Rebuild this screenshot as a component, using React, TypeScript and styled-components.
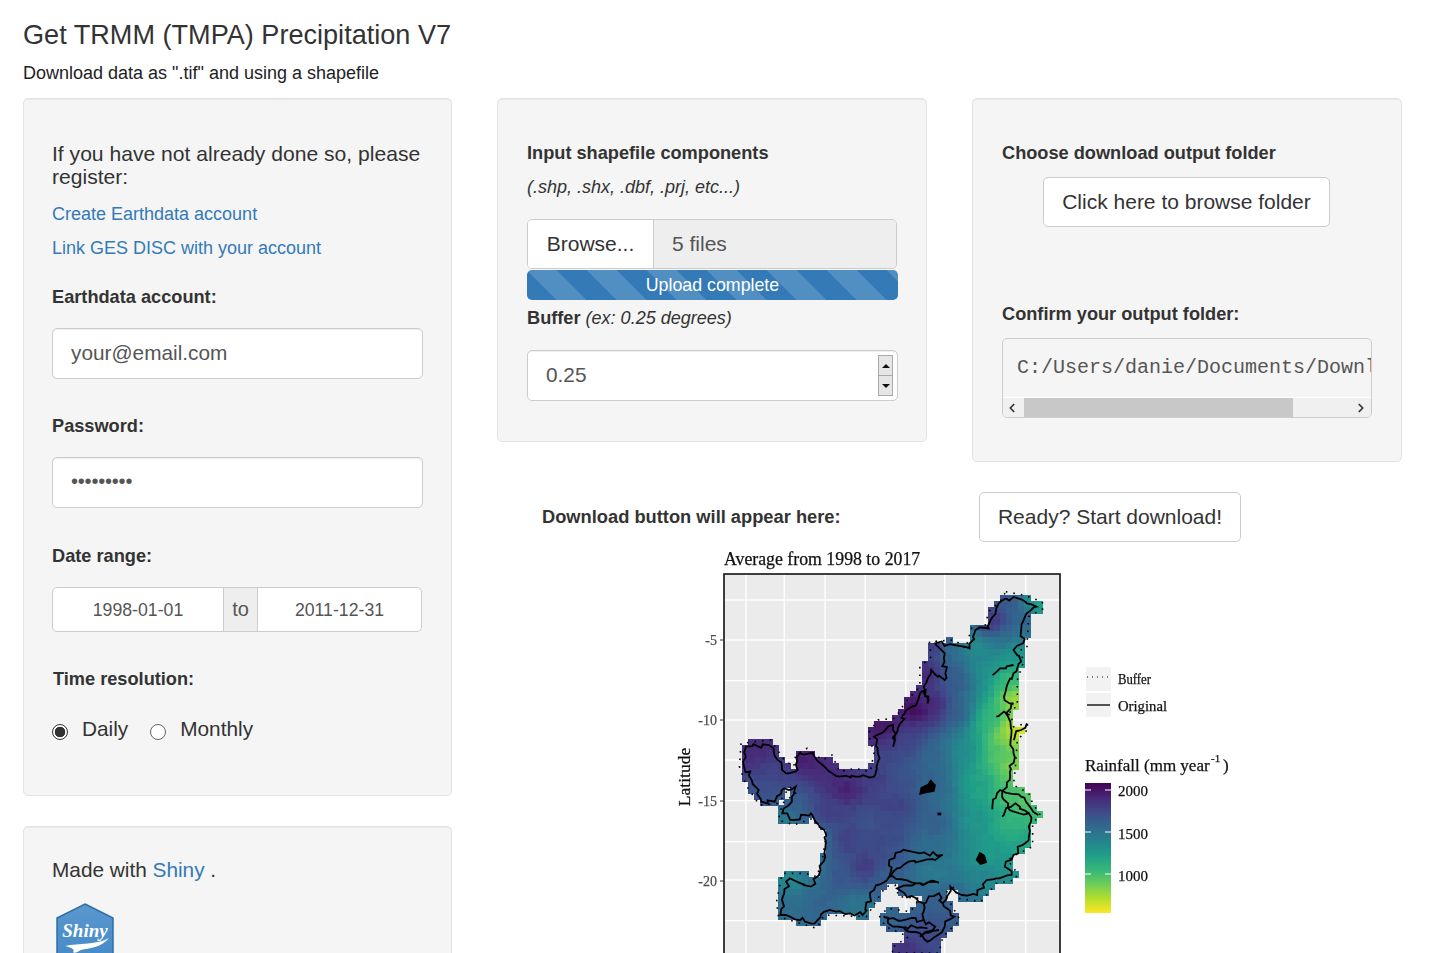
import React from "react";
import styled, {createGlobalStyle} from "styled-components";
import {ChevronLeft, ChevronRight} from "lucide-react";

const GlobalStyle = createGlobalStyle`
  html, body {
    margin: 0;
    height: 953px;
    overflow: hidden;
    background: #fff;
  }
  body {
    font-family: "Liberation Sans", Arial, sans-serif;
    color: #333;
  }
  * {
    box-sizing: border-box;
  }
`;

const Page = styled.div`
  height: 953px;
  overflow: hidden;
  padding: 0 0 0 23px;
`;

const Title = styled.h2`
  margin: 0;
  padding-top: 18px;
  height: 55px;
  font-size: 27.1px;
  line-height: 33px;
  font-weight: 400;
`;

const Subtitle = styled.div`
  height: 43px;
  font-size: 18px;
  line-height: 37px;
  color: #222;
`;

const Columns = styled.div`
  display: flex;
  gap: 45px;
  align-items: flex-start;
`;

const LeftColumn = styled.div`
  width: 429px;
  display: flex;
  flex-direction: column;
  gap: 30px;
`;

const RightArea = styled.div`
  width: 905px;
`;

const TopRow = styled.div`
  display: flex;
  gap: 45px;
  align-items: flex-start;
`;

const Well = styled.div<{$pad: number; $top: number; $bottom: number; $width: number}>`
  width: ${(p) => p.$width}px;
  padding: ${(p) => p.$top}px ${(p) => p.$pad}px ${(p) => p.$bottom}px;
  background: #f5f5f5;
  border: 1px solid #e3e3e3;
  border-radius: 5px;
  box-shadow: inset 0 1px 1px rgba(0, 0, 0, 0.05);
`;

const Lead = styled.div`
  font-size: 21.1px;
  line-height: 23px;
`;

const TextLink = styled.a<{$mt: number}>`
  display: block;
  margin-top: ${(p) => p.$mt}px;
  font-size: 18px;
  line-height: 24px;
  color: #337ab7;
`;

const Label = styled.div<{$mt?: number; $indent?: number}>`
  margin-top: ${(p) => p.$mt ?? 0}px;
  margin-left: ${(p) => p.$indent ?? 0}px;
  font-size: 18.2px;
  line-height: 24px;
  font-weight: 700;
  white-space: nowrap;
`;

const Hint = styled.div<{$mt: number}>`
  margin-top: ${(p) => p.$mt}px;
  font-size: 18px;
  line-height: 24px;
  font-style: italic;
`;

const Normal = styled.span`
  font-size: 18px;
  font-weight: 400;
  font-style: italic;
`;

const TextInput = styled.div<{$mt: number; $width?: number}>`
  display: flex;
  align-items: center;
  justify-content: space-between;
  margin-top: ${(p) => p.$mt}px;
  width: ${(p) => (p.$width ? `${p.$width}px` : "auto")};
  height: 51px;
  padding: 0 4px 2px 18px;
  background: #fff;
  border: 1px solid #ccc;
  border-radius: 5px;
  box-shadow: inset 0 1px 1px rgba(0, 0, 0, 0.075);
  font-size: 20.8px;
  color: #555;
`;

const Dots = styled.span`
  font-size: 20px;
  letter-spacing: -0.2px;
  color: #555;
`;

const Spinner = styled.div`
  display: flex;
  flex-direction: column;
  width: 15px;
  height: 41px;
  margin-top: 2px;
  border: 1px solid #a9a9a9;
`;

const SpinButton = styled.div`
  flex: 1;
  display: flex;
  align-items: center;
  justify-content: center;
  background: #e6e6e6;
  & + & {
    border-top: 1px solid #a9a9a9;
  }
`;

const Arrow = styled.span<{$down?: boolean}>`
  width: 0;
  height: 0;
  border-left: 4px solid transparent;
  border-right: 4px solid transparent;
  ${(p) => (p.$down ? "border-top: 4px solid #111;" : "border-bottom: 4px solid #111;")}
`;

const DateGroup = styled.div`
  display: flex;
  margin-top: 19px;
  height: 45px;
  width: 370px;
  background: #fff;
  border: 1px solid #ccc;
  border-radius: 5px;
  font-size: 17.7px;
  color: #555;
`;

const DateField = styled.div<{$width: number}>`
  width: ${(p) => p.$width}px;
  display: flex;
  align-items: center;
  justify-content: center;
  padding-top: 2px;
`;

const DateJoin = styled.div`
  width: 35px;
  display: flex;
  align-items: center;
  justify-content: center;
  background: #eee;
  border-left: 1px solid #ccc;
  border-right: 1px solid #ccc;
  font-size: 20px;
`;

const RadioRow = styled.div`
  display: flex;
  align-items: center;
  margin-top: 26px;
  height: 24px;
  font-size: 20.8px;
`;

const RadioItem = styled.div`
  display: flex;
  align-items: center;
  margin-right: 22px;
`;

const RadioMark = styled.span<{$on?: boolean}>`
  width: 16px;
  height: 16px;
  margin: 5px 14px 0 0;
  border-radius: 50%;
  border: 1px solid ${(p) => (p.$on ? "#333" : "#666")};
  background: ${(p) => (p.$on ? "radial-gradient(circle, #333 0, #333 5px, #fff 5.6px)" : "#fff")};
`;

const MadeWith = styled.div`
  font-size: 20.8px;
  line-height: 24px;
`;

const InlineLink = styled.a`
  color: #337ab7;
`;

const Logo = styled.svg`
  display: block;
  margin: 21px 0 0 3px;
`;

const FileRow = styled.div`
  display: flex;
  margin-top: 20px;
  height: 50px;
  border: 1px solid #ccc;
  border-radius: 5px;
  overflow: hidden;
  font-size: 21px;
`;

const BrowseButton = styled.div`
  width: 126px;
  display: flex;
  align-items: center;
  justify-content: center;
  background: #fff;
  border-right: 1px solid #ccc;
`;

const FileName = styled.div`
  flex: 1;
  display: flex;
  align-items: center;
  padding-left: 18px;
  background: #eee;
  color: #555;
`;

const Progress = styled.div`
  display: flex;
  align-items: center;
  justify-content: center;
  width: 371px;
  margin-top: 1px;
  height: 30px;
  border-radius: 5px;
  color: #fff;
  font-size: 17.8px;
  background-color: #337ab7;
  background-image: linear-gradient(
    45deg,
    rgba(255, 255, 255, 0.15) 25%,
    transparent 25%,
    transparent 50%,
    rgba(255, 255, 255, 0.15) 50%,
    rgba(255, 255, 255, 0.15) 75%,
    transparent 75%,
    transparent
  );
  background-size: 60px 60px;
`;

const Button = styled.div<{$width: number; $ml?: number; $mt?: number}>`
  display: flex;
  align-items: center;
  justify-content: center;
  width: ${(p) => p.$width}px;
  height: 50px;
  margin-left: ${(p) => p.$ml ?? 0}px;
  margin-top: ${(p) => p.$mt ?? 0}px;
  background: #fff;
  border: 1px solid #ccc;
  border-radius: 5px;
  font-size: 21px;
  white-space: nowrap;
`;

const PathBox = styled.div`
  margin-top: 12px;
  height: 80px;
  background: #f5f5f5;
  border: 1px solid #ccc;
  border-radius: 5px;
  overflow: hidden;
`;

const PathText = styled.div`
  height: 58px;
  padding: 17px 0 0 14px;
  font-family: "Liberation Mono", "Courier New", monospace;
  font-size: 20px;
  line-height: 24px;
  white-space: nowrap;
  overflow: hidden;
  color: #555;
`;

const ScrollBar = styled.div`
  display: flex;
  align-items: center;
  height: 20px;
  background: #f0f0f0;
  border-top: 1px solid #fff;
  color: #333;
`;

const ScrollArrow = styled.div<{$shift?: number}>`
  width: 21px;
  display: flex;
  justify-content: center;
  padding-right: ${(p) => p.$shift ?? 0}px;
`;

const ScrollThumb = styled.div`
  width: 269px;
  height: 19px;
  background: #c8c8c8;
`;

const ScrollRest = styled.div`
  flex: 1;
`;

const DownloadRow = styled.div`
  display: flex;
  align-items: center;
  margin-top: 30px;
  height: 50px;
`;

const DownloadLabel = styled.div`
  width: 482px;
  padding-left: 45px;
  font-size: 18.3px;
  font-weight: 700;
`;

const PlotSvg = styled.svg`
  display: block;
  margin: 3px 0 0 163px;
  filter: blur(0.5px);
`;

const SerifText = styled.text<{$size: number; $fill?: string}>`
  font-family: "Liberation Serif", "Times New Roman", serif;
  font-size: ${(p) => p.$size}px;
  fill: ${(p) => p.$fill ?? "#111"};
  stroke: ${(p) => p.$fill ?? "#111"};
  stroke-width: 0.25px;
`;

type Pt = [number, number];

// all map coordinates are taken off the 600x413 crop of the plot
const OUTLINE: Pt[] = [
  [905, 155], [950, 165], [1000, 185], [1005, 205], [965, 230], [960, 320], [945, 325], [950, 370], [935, 420],
  [935, 500], [915, 510], [925, 560], [960, 550], [965, 565], [935, 600], [930, 680], [925, 735], [965, 760],
  [975, 790], [995, 825], [975, 850], [975, 920], [930, 945], [910, 960], [935, 1000], [930, 1020], [880, 1030],
  [840, 1085], [780, 1075], [770, 1040], [745, 1060], [770, 1110], [785, 1140], [740, 1190], [730, 1239],
  [610, 1239], [605, 1225], [650, 1190], [590, 1160], [575, 1130], [595, 1105], [655, 1115], [680, 1075],
  [625, 1070], [615, 1035], [590, 1040], [540, 1130], [430, 1125], [410, 1165], [310, 1130], [305, 1085],
  [320, 1000], [380, 1000], [410, 1010], [425, 960], [435, 880], [400, 835], [350, 855], [310, 840], [320, 790],
  [355, 760], [340, 740], [310, 790], [260, 795], [225, 735], [208, 680], [212, 610], [290, 600], [325, 660],
  [350, 680], [355, 645], [385, 625], [425, 660], [450, 645], [470, 695], [510, 685], [550, 695], [560, 640],
  [545, 580], [570, 540], [615, 535], [640, 490], [680, 440], [680, 380], [710, 350], [705, 305], [770, 300],
  [800, 325], [815, 265], [850, 260], [860, 215], [890, 185],
];

const COAST: Pt[] = [
  [905, 175], [945, 178], [985, 200], [955, 230], [945, 270], [950, 310], [925, 330], [945, 365], [925, 400],
  [910, 430], [900, 470], [925, 490], [905, 520], [920, 570], [925, 640], [915, 720], [895, 770], [915, 810],
  [965, 820], [965, 860], [965, 900], [925, 945], [905, 965], [920, 1005], [880, 1015], [855, 1020], [830, 1065],
  [790, 1065], [760, 1040], [740, 1090], [770, 1130], [745, 1160], [720, 1190], [700, 1205], [680, 1180],
  [610, 1160], [585, 1130], [640, 1140], [690, 1140], [690, 1090], [640, 1060], [620, 1045], [670, 1030],
  [730, 1028], [670, 1030], [600, 1010], [600, 960], [630, 935], [680, 940], [740, 945], [720, 960], [650, 965],
  [620, 985], [600, 1010], [560, 1050], [530, 1125], [460, 1115], [430, 1115], [405, 1150], [340, 1130],
  [315, 1125], [325, 1060], [340, 1015], [395, 1040], [420, 990], [430, 940], [430, 870], [395, 820], [350, 840],
  [320, 820], [345, 770], [355, 740], [325, 745], [300, 785], [265, 785], [240, 720], [220, 680], [225, 620],
  [285, 615], [330, 700], [360, 690], [365, 640], [400, 640], [430, 680], [470, 710], [560, 710], [570, 640],
  [560, 590], [610, 555], [610, 620], [640, 520], [695, 450], [700, 490], [690, 440], [710, 390], [745, 420],
  [745, 340], [720, 310], [770, 315], [810, 325], [825, 270], [860, 265], [880, 205], [905, 175],
];

const RIVERS: Pt[][] = [
  [[870, 405], [890, 385], [925, 375]],
  [[880, 530], [900, 515], [915, 525]],
  [[925, 600], [945, 570], [960, 550]],
  [[870, 808], [890, 750], [945, 770], [990, 825]],
  [[895, 830], [930, 790], [965, 820]],
  [[690, 1140], [720, 1160], [680, 1190], [730, 1170]],
  [[690, 1090], [730, 1060], [740, 1090]],
  [[640, 1160], [700, 1165]],
];

const BLOBS: Pt[][] = [
  [[678, 765], [682, 742], [700, 732], [708, 718], [722, 735], [718, 755], [695, 760]],
  [[826, 960], [836, 935], [850, 945], [856, 968], [838, 975]],
  [[726, 818], [736, 818], [736, 826], [726, 826]],
];

const SAMPLES: [number, number, number][] = [
  [905, 170, 0.25], [990, 195, 0.6], [960, 230, 0.3], [870, 250, 0.12], [900, 300, 0.35], [830, 320, 0.5],
  [920, 340, 0.55], [760, 330, 0.38], [720, 320, 0.15], [700, 400, 0.1], [780, 420, 0.28], [850, 400, 0.5],
  [910, 420, 0.68], [930, 480, 0.88], [670, 510, 0.02], [720, 500, 0.1], [780, 520, 0.3], [860, 540, 0.65],
  [915, 580, 0.85], [945, 570, 1], [590, 560, 0.05], [640, 600, 0.2], [720, 650, 0.32], [800, 640, 0.48],
  [880, 650, 0.72], [920, 680, 0.82], [250, 640, 0.12], [300, 700, 0.2], [260, 760, 0.25], [380, 660, 0.08],
  [440, 690, 0.12], [490, 750, 0.08], [560, 720, 0.18], [640, 720, 0.25], [720, 740, 0.32], [840, 740, 0.58],
  [910, 760, 0.72], [960, 780, 0.75], [985, 825, 0.68], [350, 790, 0.28], [330, 830, 0.42], [440, 820, 0.18],
  [550, 840, 0.25], [620, 800, 0.18], [720, 850, 0.3], [830, 840, 0.52], [920, 860, 0.65], [960, 900, 0.58],
  [420, 900, 0.38], [480, 900, 0.18], [600, 900, 0.22], [700, 920, 0.35], [860, 950, 0.55], [540, 980, 0.15],
  [480, 1000, 0.26], [400, 980, 0.38], [340, 1020, 0.48], [320, 1100, 0.35], [420, 1090, 0.32], [520, 1100, 0.4],
  [590, 1010, 0.3], [720, 1000, 0.42], [860, 1010, 0.45], [920, 990, 0.52], [740, 1080, 0.3], [620, 1130, 0.33],
  [700, 1180, 0.22], [640, 1220, 0.14], [760, 1130, 0.28],
];

const VIRIDIS: [number, number, number][] = [
  [68, 1, 84], [72, 40, 120], [62, 74, 137], [49, 104, 142], [38, 130, 142],
  [31, 158, 137], [53, 183, 121], [109, 205, 89], [180, 222, 44], [253, 231, 37],
];

const viridis = (v: number) => {
  const t = Math.max(0, Math.min(0.9999, v)) * (VIRIDIS.length - 1);
  const i = Math.floor(t);
  const f = t - i;
  const c = VIRIDIS[i].map((a, k) => Math.round(a + (VIRIDIS[i + 1][k] - a) * f));
  return `rgb(${c[0]},${c[1]},${c[2]})`;
};

const hash = (a: number, b: number) => {
  const s = Math.sin(a * 12.9898 + b * 78.233) * 43758.5453;
  return s - Math.floor(s);
};

const inside = (x: number, y: number, poly: Pt[]) => {
  let hit = false;
  for (let i = 0, j = poly.length - 1; i < poly.length; j = i++) {
    const [xi, yi] = poly[i];
    const [xj, yj] = poly[j];
    if (yi > y !== yj > y && x < ((xj - xi) * (y - yi)) / (yj - yi) + xi) hit = !hit;
  }
  return hit;
};

const rainfallAt = (x: number, y: number) => {
  let sum = 0;
  let weight = 0;
  SAMPLES.forEach(([sx, sy, v]) => {
    const d = (sx - x) ** 2 + (sy - y) ** 2 + 900;
    const w = 1 / d ** 1.6;
    sum += v * w;
    weight += w;
  });
  return sum / weight + (hash(x, y) - 0.5) * 0.025;
};

const CELL_W = 15.7;
const CELL_H = 18;

const CELLS: {x: number; y: number; fill: string}[] = [];
for (let y = 148; y < 1245; y += CELL_H) {
  for (let x = 200; x < 1010; x += CELL_W) {
    if (inside(x + CELL_W / 2, y + CELL_H / 2, OUTLINE)) {
      CELLS.push({x, y, fill: viridis(rainfallAt(x + CELL_W / 2, y + CELL_H / 2))});
    }
  }
}

const roughen = (points: Pt[]) => {
  const out: Pt[] = [];
  points.forEach((p, i) => {
    out.push(p);
    const next = points[i + 1];
    if (!next) return;
    const steps = Math.max(2, Math.round(Math.hypot(next[0] - p[0], next[1] - p[1]) / 12));
    for (let k = 1; k < steps; k++) {
      const f = k / steps;
      out.push([
        p[0] + (next[0] - p[0]) * f + (hash(i, k) - 0.5) * 14,
        p[1] + (next[1] - p[1]) * f + (hash(k, i) - 0.5) * 14,
      ]);
    }
  });
  return out;
};

const toPoints = (points: Pt[]) => points.map((p) => p.join(",")).join(" ");

const GRID_X = [225, 325, 432, 537, 643, 745, 851, 957];
const GRID_Y = [180, 300, 422, 540, 660, 782, 905, 1020, 1142];
const SX = 600 / 1570;
const SY = 1 / 3;
const px = (x: number) => x * SX;
const py = (y: number) => y * SY;

const Plot: React.FC = () => (
  <PlotSvg width={600} height={408} viewBox="0 5 600 408">
    <defs>
      <linearGradient id="rain" x1="0" y1="0" x2="0" y2="1">
        {VIRIDIS.map((_, i) => (
          <stop key={i} offset={i / 9} stopColor={viridis(i / 9)}/>
        ))}
      </linearGradient>
    </defs>
    <SerifText $size={17.8} x={64} y={25}>Average from 1998 to 2017</SerifText>
    <rect x={64} y={34} width={336} height={400} fill="#ebebeb"/>
    {GRID_X.map((x) => (
      <line key={x} x1={px(x)} x2={px(x)} y1={34} y2={413} stroke="#fff" strokeWidth={1.4}/>
    ))}
    {GRID_Y.map((y) => (
      <line key={y} x1={64} x2={400} y1={py(y)} y2={py(y)} stroke="#fff" strokeWidth={1.4}/>
    ))}
    <g transform={`scale(${SX} ${SY})`}>
      {CELLS.map((c) => (
        <rect key={`${c.x}-${c.y}`} x={c.x} y={c.y} width={CELL_W + 0.6} height={CELL_H + 0.6} fill={c.fill} shapeRendering="crispEdges"/>
      ))}
      <polygon
        points={toPoints(OUTLINE)}
        fill="none"
        stroke="#000"
        strokeWidth={1.6}
        strokeDasharray="1.6 6"
        vectorEffect="non-scaling-stroke"
      />
      <polyline
        points={toPoints(roughen(COAST))}
        fill="none"
        stroke="#000"
        strokeWidth={1.8}
        vectorEffect="non-scaling-stroke"
      />
      {RIVERS.map((r, i) => (
        <polyline
          key={i}
          points={toPoints(roughen(r))}
          fill="none"
          stroke="#000"
          strokeWidth={1.8}
          vectorEffect="non-scaling-stroke"
        />
      ))}
      {BLOBS.map((b, i) => (
        <polygon key={i} points={toPoints(b)} fill="#000"/>
      ))}
    </g>
    <rect x={64} y={34} width={336} height={400} fill="none" stroke="#111" strokeWidth={1.6}/>
    {[["-5", 100], ["-10", 180], ["-15", 261], ["-20", 341]].map(([t, y]) => (
      <g key={t}>
        <SerifText $size={14} $fill="#4d4d4d" x={57} y={Number(y) + 5} textAnchor="end">{t}</SerifText>
        <line x1={60} x2={64} y1={y} y2={y} stroke="#333"/>
      </g>
    ))}
    <SerifText $size={17.5} x={30} y={237} textAnchor="middle" transform="rotate(-90 30 237)">Latitude</SerifText>

    <rect x={426} y={127} width={25} height={24} fill="#f2f2f2"/>
    <rect x={426} y={153} width={25} height={24} fill="#f2f2f2"/>
    <line x1={427} x2={450} y1={137} y2={137} stroke="#111" strokeWidth={1.2} strokeDasharray="1 4"/>
    <line x1={427} x2={450} y1={165} y2={165} stroke="#111" strokeWidth={1.4}/>
    <SerifText $size={14.5} x={458} y={144} textLength={33} lengthAdjust="spacingAndGlyphs">Buffer</SerifText>
    <SerifText $size={14.5} x={458} y={171} textLength={49} lengthAdjust="spacingAndGlyphs">Original</SerifText>

    <SerifText $size={17} x={425} y={231}>Rainfall (mm year</SerifText>
    <SerifText $size={11} x={551} y={222}>-1</SerifText>
    <SerifText $size={17} x={563} y={231}>)</SerifText>
    <rect x={425} y={243} width={26} height={130} fill="url(#rain)"/>
    {[250, 292, 334].map((y) => (
      <g key={y}>
        <line x1={425} x2={431} y1={y} y2={y} stroke="#fff" strokeWidth={1}/>
        <line x1={445} x2={451} y1={y} y2={y} stroke="#fff" strokeWidth={1}/>
      </g>
    ))}
    <SerifText $size={15} x={458} y={256}>2000</SerifText>
    <SerifText $size={15} x={458} y={299}>1500</SerifText>
    <SerifText $size={15} x={458} y={341}>1000</SerifText>
  </PlotSvg>
);

const App: React.FC = () => (
  <Page>
    <GlobalStyle/>
    <Title>Get TRMM (TMPA) Precipitation V7</Title>
    <Subtitle>Download data as ".tif" and using a shapefile</Subtitle>
    <Columns>
      <LeftColumn>
        <Well $pad={28} $top={43} $bottom={54} $width={429}>
          <Lead>If you have not already done so, please register:</Lead>
          <TextLink $mt={14}>Create Earthdata account</TextLink>
          <TextLink $mt={10}>Link GES DISC with your account</TextLink>
          <Label $mt={25}>Earthdata account:</Label>
          <TextInput $mt={19}>your@email.com</TextInput>
          <Label $mt={35}>Password:</Label>
          <TextInput $mt={19}><Dots>•••••••••</Dots></TextInput>
          <Label $mt={36}>Date range:</Label>
          <DateGroup>
            <DateField $width={170}>1998-01-01</DateField>
            <DateJoin>to</DateJoin>
            <DateField $width={163}>2011-12-31</DateField>
          </DateGroup>
          <Label $mt={35} $indent={1}>Time resolution:</Label>
          <RadioRow>
            <RadioItem><RadioMark $on/>Daily</RadioItem>
            <RadioItem><RadioMark/>Monthly</RadioItem>
          </RadioRow>
        </Well>
        <Well $pad={28} $top={31} $bottom={40} $width={429}>
          <MadeWith>Made with <InlineLink>Shiny</InlineLink> .</MadeWith>
          <Logo width={60} height={72} viewBox="0 0 60 72">
            <defs>
              <linearGradient id="hex" x1="0" y1="0" x2="0" y2="1">
                <stop offset="0" stopColor="#5b98cd"/>
                <stop offset="1" stopColor="#3f86c6"/>
              </linearGradient>
            </defs>
            <polygon points="30,1 58,15 58,71 2,71 2,15" fill="url(#hex)" stroke="#2e6fa8" strokeWidth={1.5}/>
            <text
              x={30}
              y={34}
              textAnchor="middle"
              fontFamily="'Liberation Serif', serif"
              fontStyle="italic"
              fontWeight={700}
              fontSize={19}
              fill="#fff"
            >
              Shiny
            </text>
            <path d="M10 43 C24 40 42 42 54 35 C46 45 34 45 26 47 C22 49 20 51 18 49 C20 47 18 45 10 43 Z" fill="#fff"/>
          </Logo>
        </Well>
      </LeftColumn>
      <RightArea>
        <TopRow>
          <Well $pad={29} $top={42} $bottom={40} $width={430}>
            <Label>Input shapefile components</Label>
            <Hint $mt={10}>(.shp, .shx, .dbf, .prj, etc...)</Hint>
            <FileRow>
              <BrowseButton>Browse...</BrowseButton>
              <FileName>5 files</FileName>
            </FileRow>
            <Progress>Upload complete</Progress>
            <Label $mt={6}>Buffer <Normal>(ex: 0.25 degrees)</Normal></Label>
            <TextInput $mt={20} $width={371}>
              0.25
              <Spinner>
                <SpinButton><Arrow/></SpinButton>
                <SpinButton><Arrow $down/></SpinButton>
              </Spinner>
            </TextInput>
          </Well>
          <Well $pad={29} $top={42} $bottom={43} $width={430}>
            <Label>Choose download output folder</Label>
            <Button $width={287} $ml={41} $mt={12}>Click here to browse folder</Button>
            <Label $mt={75}>Confirm your output folder:</Label>
            <PathBox>
              <PathText>C:/Users/danie/Documents/Downloads/TRMM</PathText>
              <ScrollBar>
                <ScrollArrow $shift={3}><ChevronLeft size={14} strokeWidth={3}/></ScrollArrow>
                <ScrollThumb/>
                <ScrollRest/>
                <ScrollArrow><ChevronRight size={14} strokeWidth={3}/></ScrollArrow>
              </ScrollBar>
            </PathBox>
          </Well>
        </TopRow>
        <DownloadRow>
          <DownloadLabel>Download button will appear here:</DownloadLabel>
          <Button $width={262}>Ready? Start download!</Button>
        </DownloadRow>
        <Plot/>
      </RightArea>
    </Columns>
  </Page>
);

export default App;
